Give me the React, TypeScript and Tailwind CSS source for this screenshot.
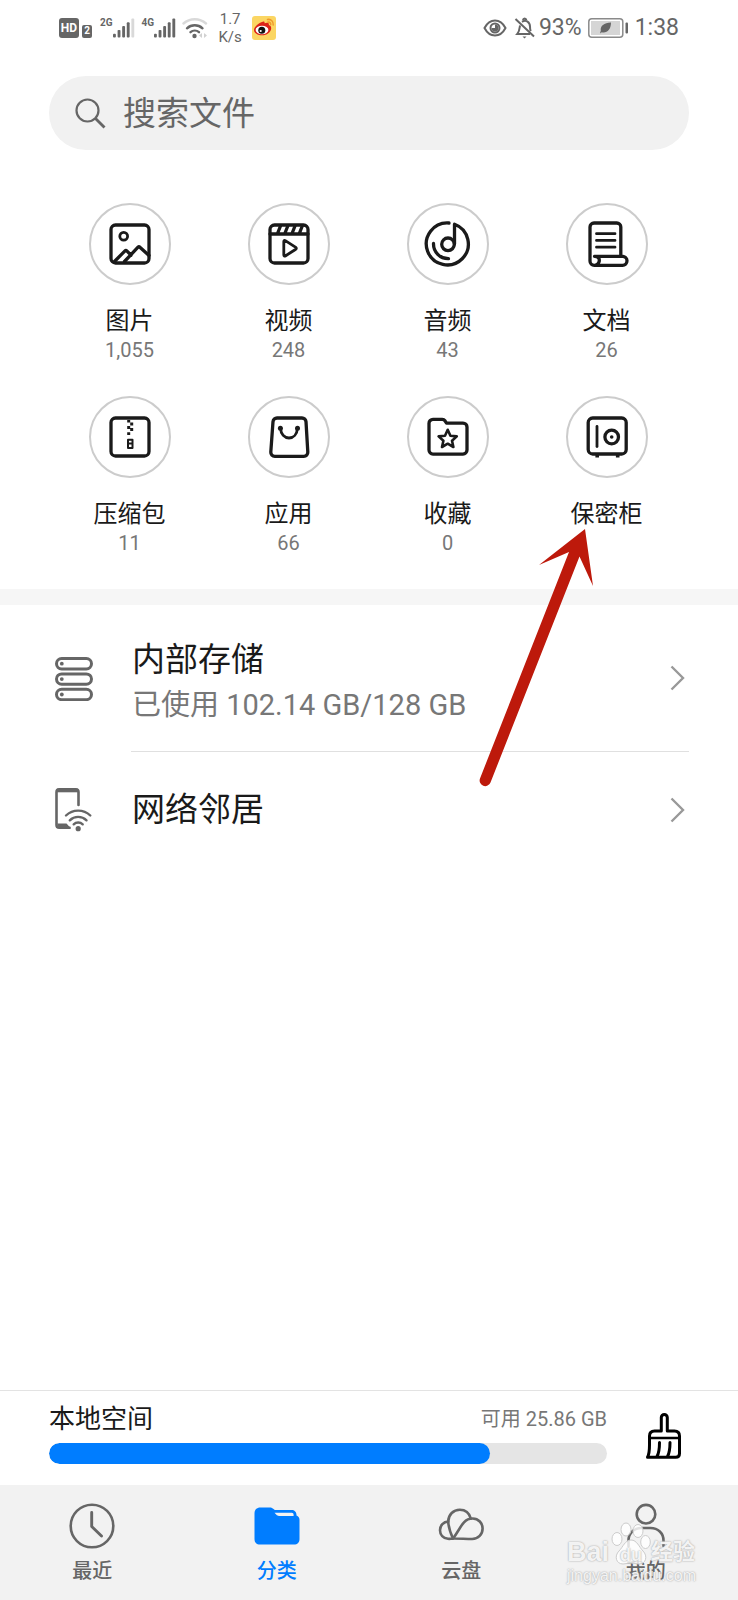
import type { ReactNode } from "react";

type Category = {
  name: string;
  count?: string;
  icon: ReactNode;
};

const categories: Category[] = [
  {
    name: "图片",
    count: "1,055",
    icon: (
      <>
        <rect x="5" y="5" width="38" height="38" rx="4.5" />
        <circle cx="17.7" cy="16.3" r="3.9" strokeWidth="2.8" />
        <path d="M8 42l11-11.2c.6-.6 1.2-.6 1.8 0L25 35.2M18.500 41.500L32 27.200c.6-.6 1.300-.6 1.900 0L43 35.500" />
      </>
    ),
  },
  {
    name: "视频",
    count: "248",
    icon: (
      <>
        <rect x="5" y="5" width="38" height="38" rx="4.5" />
        <path d="M5 14h38M15.500 6l-2.800 7M22.800 6L20 13M30 6l-2.800 7M37.300 6l-2.800 7" />
        <path d="M18.800 21.500v13.600c0 .9.8 1.300 1.500.9l10.500-6.800c.7-.5.7-1.300 0-1.800L20.300 20.600c-.7-.4-1.500 0-1.500.9z" strokeWidth="2.800" />
      </>
    ),
  },
  {
    name: "音频",
    count: "43",
    icon: (
      <>
        <path d="M25 3A21 21 0 1 0 30.500 4.200V24" />
        <circle cx="24" cy="24.300" r="6.300" />
        <path d="M9.500 23.500A14.800 14.800 0 0 0 24.500 38.700" />
      </>
    ),
  },
  {
    name: "文档",
    count: "26",
    icon: (
      <>
        <path d="M37.800 36V7a4 4 0 0 0-4-4H11a4 4 0 0 0-4 4v34a4.300 4.300 0 0 0 4.300 4.300H39.500a4.400 4.400 0 0 0 0-9H11.500c4 0 5.500 2.700 4.500 5.700-.6 1.900-1.800 3-4.200 3.300" />
        <path d="M13.500 13.700h18.500M13.500 20.400h18.500M13.500 27.200h18.500" strokeWidth="2.800" />
      </>
    ),
  },
  {
    name: "压缩包",
    count: "11",
    icon: (
      <>
        <rect x="5" y="5" width="38" height="38" rx="4.500" />
        <path
          d="M21.200 7h3v2.500h3v3h-3v2.500h3v3h-3v4h-3v-2.800h3v-3.200h-3v-3h3V9.500h-3z"
          fill="currentColor"
          stroke="none"
        />
        <path d="M22 26.700h4.500v8.300H22zM22 30.500h4.500" strokeWidth="2" />
      </>
    ),
  },
  {
    name: "应用",
    count: "66",
    icon: (
      <>
        <path d="M12 5h25a4 4 0 0 1 4 3.700l1.800 30.300a4 4 0 0 1-4 4.300H9.800a4 4 0 0 1-4-4.300L8 8.700A4 4 0 0 1 12 5z" />
        <path d="M15.500 15.300c.4 6 4 9.700 8.500 9.700s8-3.700 8.400-9.700" strokeWidth="2.800" />
        <circle cx="15.400" cy="15.200" r="2.500" fill="currentColor" stroke="none" />
        <circle cx="32.500" cy="15.200" r="2.500" fill="currentColor" stroke="none" />
      </>
    ),
  },
  {
    name: "收藏",
    count: "0",
    icon: (
      <>
        <path d="M9 6.300h9.300c1.300 0 2 .5 2.700 1.500l1.500 2.300H39a4 4 0 0 1 4 4v23a4 4 0 0 1-4 4H9a4 4 0 0 1-4-4V10.300a4 4 0 0 1 4-4z" />
        <path d="M23.700 16.800l2.700 5.900 6.400.7-4.800 4.300 1.400 6.300-5.700-3.300L18 34l1.400-6.300-4.800-4.300 6.400-.7z" strokeWidth="2.600" />
      </>
    ),
  },
  {
    name: "保密柜",
    icon: (
      <>
        <rect x="5.200" y="5" width="38" height="36" rx="4.500" />
        <path d="M14 13.500v20" strokeWidth="2.800" />
        <path d="M14.200 41.500v3M34.700 41.500v3" strokeWidth="3.600" strokeLinecap="butt" />
        <circle cx="28.700" cy="24" r="6.800" />
        <circle cx="28.700" cy="24" r="1.800" fill="currentColor" stroke="none" />
      </>
    ),
  },
];

const tabs: { name: string; active?: boolean; icon: ReactNode }[] = [
  {
    name: "最近",
    icon: (
      <svg width="46" height="46" viewBox="0 0 46 46" fill="none" stroke="currentColor" strokeWidth="2.600" strokeLinecap="round" strokeLinejoin="round">
        <circle cx="23" cy="23" r="21.300" />
        <path d="M22.700 9.500V23.500l9.800 9.500" strokeWidth="2.900" />
      </svg>
    ),
  },
  {
    name: "分类",
    active: true,
    icon: (
      <svg width="46" height="46" viewBox="0 0 46 46">
        <path
          d="M6.500 4.500h9c1.700 0 2.600.4 3.700 1.300l1.600 1.200H37.500c3 0 5 2 5 5v.5c2 .8 3 2.300 3 4.500v19c0 3.500-2 5.500-5.500 5.500H6c-3.500 0-5.500-2-5.500-5.500V10.500c0-3.800 2-6 6-6z"
          fill="currentColor"
        />
        <path d="M20.500 9.700h17.200c1.200 0 1.900.7 1.900 2v1.200H25c-1.200 0-1.900-.3-2.600-1.100z" fill="#f2f2f2" />
      </svg>
    ),
  },
  {
    name: "云盘",
    icon: (
      <svg width="46" height="46" viewBox="0 0 46 46" fill="none" stroke="currentColor" strokeWidth="2.600" strokeLinecap="round" strokeLinejoin="round">
        <path d="M15 35.500C20 29 22.500 23 26 19.300c2.300-2.500 5.500-3.800 8.700-3.800 5.800 0 9.900 4.700 9.900 10 0 5.800-4.300 10.500-10.500 10.500-6.500 0-13-.6-19.100-.5-2.500.4-3.800.5-5 .3C5.300 35.300 2 31.800 2 27.200c0-4.700 3.500-8.500 8.300-8.700" />
        <path d="M15 35.500C12.500 30 10.500 24.500 10.200 18.500 10.400 11.500 15.500 6.700 21.800 6.700c5.200 0 9.500 3.300 11 8.800" />
      </svg>
    ),
  },
  {
    name: "我的",
    icon: (
      <svg width="46" height="46" viewBox="0 0 46 46" fill="none" stroke="currentColor" strokeWidth="2.600" strokeLinecap="round">
        <circle cx="23" cy="11.200" r="9.300" />
        <path d="M5.500 43v-5.500C5.500 30 11 25 18.500 25h9C35 25 40.500 30 40.500 37.500V43" />
      </svg>
    ),
  },
];

function SignalBars({ label, weak }: { label: string; weak?: boolean }) {
  return (
    <div className="flex">
      <span className="text-[10px] leading-[12px] font-bold">{label}</span>
      <svg width="22" height="22" viewBox="0 0 23 22" fill="currentColor">
        <rect x="0" y="17" width="3" height="4" rx="1" />
        <rect x="4.800" y="13" width="3" height="8" rx="1" />
        <rect x="9.600" y="9" width="3" height="12" rx="1" />
        <rect x="14.400" y="5" width="3" height="16" rx="1" />
        <rect x="19.200" y="1" width="3" height="20" rx="1" opacity={weak ? 0.25 : 1} />
      </svg>
    </div>
  );
}

function StatusBar() {
  return (
    <header className="flex h-14 items-center justify-between px-[59px] text-[#666]">
      <div className="flex items-center">
        <span className="flex h-5 w-5 items-center justify-center rounded-[3px] bg-[#666] text-[12px] leading-none font-bold text-white">
          HD
        </span>
        <span className="mt-[6px] ml-[3px] flex h-[13px] w-[10px] items-center justify-center rounded-[2px] bg-[#666] text-[10px] leading-none font-bold text-white">
          2
        </span>
        <div className="ml-2 flex gap-[7px]">
          <SignalBars label="2G" weak />
          <SignalBars label="4G" />
        </div>
        <svg className="ml-[6px]" width="26" height="22" viewBox="0 0 26 22" fill="none" stroke="currentColor" strokeWidth="2.400" strokeLinecap="round">
          <path d="M1.500 6.500a17 17 0 0 1 22.500 0" opacity=".25" />
          <path d="M5 11.300a11.500 11.500 0 0 1 15.500 0M8.500 15.200a6.500 6.500 0 0 1 8.500 0" />
          <circle cx="12.500" cy="19" r="2.200" fill="currentColor" stroke="none" />
          <path d="M20 16v5l-3-2.500zM22 16v5l3-2.500z" fill="currentColor" stroke="none" opacity=".3" />
        </svg>
        <div className="ml-[10px] w-6 text-center text-[15px] leading-[18px]">
          1.7
          <br />
          K/s
        </div>
        <svg className="ml-[10px]" width="24" height="24" viewBox="0 0 24 24">
          <rect width="24" height="24" rx="3" fill="#fbd663" />
          <path d="M10 6c1.500-1 3-.5 2.600 1.300 2.300-.9 4.700-.8 4.300 1.700 1.300.5 2.300 1.400 2.300 3.200 0 4-4.600 7.100-9 7.100-4.500 0-8.200-2.300-8.200-5.400C2 10.900 6.600 7.200 10 6z" fill="#dc2419" />
          <ellipse cx="10" cy="14" rx="6.400" ry="4.200" fill="#fff" />
          <circle cx="9.800" cy="14.300" r="3.500" fill="#111" />
          <circle cx="8.700" cy="15" r="1.100" fill="#fff" />
          <path d="M15.500 3.500c3.500-.7 6.200 2 5.700 5.500M16 6c1.700-.2 2.900 1 2.700 2.700" fill="none" stroke="#f0992a" strokeWidth="1.500" strokeLinecap="round" />
        </svg>
      </div>

      <div className="flex items-center text-[23px] leading-[28px]">
        <svg width="24" height="20" viewBox="0 0 24 20" fill="none" stroke="currentColor" strokeWidth="2">
          <path d="M1.500 10C4 5.200 7.500 2.500 12 2.500S20 5.200 22.500 10C20 14.800 16.500 17.500 12 17.500S4 14.800 1.500 10z" />
          <circle cx="12" cy="10" r="4.500" />
          <path d="M12 6.500a3.500 3.500 0 1 1-3.500 3.500H12z" fill="currentColor" stroke="none" />
        </svg>
        <svg className="ml-[7px]" width="21" height="22" viewBox="0 0 21 22" fill="none" stroke="currentColor" strokeWidth="2">
          <path d="M1.500 2L20 19.500M6 8.500c-.5 3.500-.5 6-2.700 8.500H16M8 4.800c4-2.500 8 .2 8 4.700 0 2 .2 3.500.7 4.700M9 3.200C9.300.8 12 .8 12.300 3.200" />
          <path d="M8.500 19.500h4L10.500 21.500z" fill="currentColor" stroke="none" />
        </svg>
        <span className="ml-1">93%</span>
        <svg className="ml-[6px]" width="41" height="20" viewBox="0 0 41 20">
          <rect x=".8" y=".8" width="34" height="18.400" rx="3" fill="#fff" stroke="#8a8a8a" strokeWidth="1.500" />
          <rect x="3" y="3" width="29" height="14" fill="#d5d5d5" />
          <rect x="37.500" y="4.500" width="2.500" height="11" rx="1" fill="#666" />
          <path d="M23 4.500C16 5 12 8 12.800 12.500L12 15.500l1.800-1.200C19 15.500 23 11.500 23 4.500z" fill="#666" />
        </svg>
        <time className="ml-[6px]">1:38</time>
      </div>
    </header>
  );
}

function Chevron() {
  return (
    <svg className="mr-[4px] shrink-0" width="15" height="26" viewBox="0 0 15 26" fill="none" stroke="#999" strokeWidth="2.400">
      <path d="M1.500 1.500L13 13 1.500 24.500" />
    </svg>
  );
}

function StorageIcon() {
  return (
    <svg className="shrink-0" width="38" height="44" viewBox="0 0 38 44" fill="none" stroke="#666" strokeWidth="3">
      {[1.5, 16.9, 32.3].map((y) => (
        <g key={y}>
          <rect x="1.500" y={y} width="35" height="10.400" rx="5.200" />
          <circle cx="6.800" cy={y + 5.2} r="1.900" fill="#666" stroke="none" />
        </g>
      ))}
    </svg>
  );
}

function NetworkIcon() {
  return (
    <svg className="shrink-0" width="38" height="44" viewBox="0 0 38 44" fill="none" stroke="#666" strokeWidth="2.600" strokeLinecap="round">
      <path d="M23.500 17V4c0-1.700-1-2.700-2.700-2.700H4.200C2.500 1.300 1.500 2.300 1.500 4v33c0 1.700 1 2.700 2.700 2.700H14.500" />
      <path d="M2 2.500h21" strokeWidth="3.600" strokeLinecap="butt" />
      <path d="M2 35.500h9.500l4.500 5H4z" fill="#666" stroke="none" />
      <path d="M11 27.500a17.500 17.500 0 0 1 24.300 0M14.800 32.300a12 12 0 0 1 16.700 0M18.700 36.300a6.500 6.500 0 0 1 9 0" strokeWidth="2.400" />
      <circle cx="23.200" cy="40.700" r="2.600" fill="#666" stroke="none" />
    </svg>
  );
}

function BrushIcon() {
  return (
    <svg width="36" height="46" viewBox="0 0 36 46" fill="none" stroke="#000" strokeWidth="3" strokeLinecap="round" strokeLinejoin="round">
      <path d="M15.300 18V4.500a3 3 0 0 1 6 0V18h7.200c3.200 0 5 1.800 5 5v17.500c0 2.500-1.300 3.800-3.800 3.800H1.500C3.200 41 3.500 37 3.500 32v-9c0-3.200 1.800-5 5-5z" />
      <path d="M3.500 25h30" strokeWidth="2.600" />
      <path d="M13.500 29.500c0 5-.2 10-2.500 14M24 29.500c0 5-.2 10-2.500 14" strokeWidth="3" />
    </svg>
  );
}

function Watermark() {
  return (
    <div className="pointer-events-none absolute right-[39px] bottom-[14px] w-[132px] font-['Liberation_Sans','Noto_Sans_CJK_SC',sans-serif] text-white/85 [text-shadow:0_0_2px_#aaa,0_0_1px_#bbb]">
      <div className="flex items-end">
        <span className="text-[27px] leading-[28px] font-bold">Bai</span>
        <div className="relative ml-[2px] flex h-[44px] w-[40px] shrink-0 items-end justify-center">
          <svg className="absolute inset-0" width="40" height="44" viewBox="0 0 40 44" fill="#fff" fillOpacity=".8" stroke="#ccc" strokeWidth="1">
            <ellipse cx="6" cy="17" rx="5" ry="6.500" />
            <ellipse cx="15" cy="7.500" rx="5" ry="6.500" />
            <ellipse cx="27" cy="9" rx="5" ry="6.500" />
            <ellipse cx="34.500" cy="20" rx="4.800" ry="6.500" />
            <path d="M20 18c6 0 8 7 12 11 5 5 3 13-4 13-3 0-5-1-8-1s-5 1-8 1c-7 0-9-8-4-13 4-4 6-11 12-11z" />
          </svg>
          <span className="relative text-[18px] leading-[22px] font-bold">du</span>
        </div>
        <span className="text-[22px] leading-[28px] font-bold whitespace-nowrap">经验</span>
      </div>
      <div className="text-[16px] leading-[20px] whitespace-nowrap">jingyan.baidu.com</div>
    </div>
  );
}

export default function App() {
  return (
    <div className="flex min-h-screen flex-col bg-white font-['Roboto','Noto_Sans_CJK_SC',sans-serif] text-[#1a1a1a]">
      <StatusBar />

      <main className="relative flex-1">
        {/* Search */}
        <label className="mx-[49px] mt-5 flex h-[74px] items-center gap-[17px] rounded-full bg-[#f1f1f1] pr-8 pl-[26px]">
          <svg className="shrink-0" width="31" height="31" viewBox="0 0 31 31" fill="none" stroke="#666" strokeWidth="2.200">
            <circle cx="12.500" cy="12.500" r="11" />
            <path d="M20.500 20.500L29.500 29.500" strokeWidth="2.800" />
          </svg>
          <input
            type="text"
            aria-label="搜索文件"
            placeholder="搜索文件"
            className="h-[50px] w-full min-w-0 bg-transparent text-[33px] outline-none placeholder:text-[#666]"
          />
        </label>

        {/* Categories */}
        <section className="grid grid-cols-4 gap-y-[34px] pt-[53px] pr-[52px] pb-[34px] pl-[50px]">
          {categories.map((c) => (
            <button key={c.name} type="button" className="flex flex-col items-center">
              <span className="flex h-[82px] w-[82px] items-center justify-center rounded-full border-2 border-[#ccc]">
                <svg
                  width="48"
                  height="48"
                  viewBox="0 0 48 48"
                  fill="none"
                  stroke="currentColor"
                  strokeWidth="3.300"
                  strokeLinecap="round"
                  strokeLinejoin="round"
                >
                  {c.icon}
                </svg>
              </span>
              <span className="mt-[21px] text-[24px] leading-[30px]">{c.name}</span>
              {c.count && <span className="mt-[2px] text-[20px] leading-[24px] text-[#777]">{c.count}</span>}
            </button>
          ))}
        </section>

        <div className="h-4 bg-[#f6f6f6]" />

        {/* Storage locations */}
        <section className="px-[49px]">
          <button type="button" className="flex w-full items-center pl-[6px] text-left">
            <StorageIcon />
            <span className="ml-[38px] flex flex-1 items-stretch border-b border-[#e0e0e0] pl-px">
              <span className="flex flex-1 flex-col gap-[3px] pt-[33px] pb-[26px]">
                <span className="text-[33px] leading-[44px]">内部存储</span>
                <span className="text-[29px] leading-[40px] text-[#777]">已使用 102.14 GB/128 GB</span>
              </span>
              <span className="flex items-center">
                <Chevron />
              </span>
            </span>
          </button>
          <button type="button" className="flex h-[116px] w-full items-center pl-[6px] text-left">
            <NetworkIcon />
            <span className="ml-[39px] flex-1 text-[33px] leading-[44px]">网络邻居</span>
            <Chevron />
          </button>
        </section>

        {/* Arrow pointing at the safe */}
        <svg
          className="pointer-events-none absolute top-[472px] right-[143px]"
          width="116"
          height="260"
          viewBox="0 0 116 260"
          fill="#bd190b"
        >
          <path d="M106 1L114 58 100.500 28.500 11.500 254.500A5.500 5.500 0 0 1 1 250.500L90 24 60 37z" />
        </svg>
      </main>

      {/* Local space */}
      <section className="flex items-center border-t border-[#e3e3e3] pt-[14px] pr-[56px] pb-[21px] pl-[49px]">
        <div className="flex-1">
          <div className="flex items-center justify-between">
            <span className="text-[26px] leading-[28px]">本地空间</span>
            <span className="text-[20px] leading-[28px] text-[#777]">可用 25.86 GB</span>
          </div>
          <div className="mt-[10px] h-[21px] overflow-hidden rounded-full bg-[#e5e5e5]">
            <div className="h-full w-[79%] rounded-full bg-[#007dff]" />
          </div>
        </div>
        <button type="button" aria-label="清理" className="mt-[3px] ml-[39px]">
          <BrushIcon />
        </button>
      </section>

      {/* Tabs */}
      <nav className="relative grid grid-cols-4 bg-[#f2f2f2]">
        {tabs.map((t) => (
          <button
            key={t.name}
            type="button"
            className={`flex flex-col items-center pt-[18px] pb-[17px] ${t.active ? "text-[#007dff]" : "text-[#666]"}`}
          >
            {t.icon}
            <span className="mt-[10px] text-[20px] leading-[24px] font-medium">{t.name}</span>
          </button>
        ))}
        <Watermark />
      </nav>
    </div>
  );
}
